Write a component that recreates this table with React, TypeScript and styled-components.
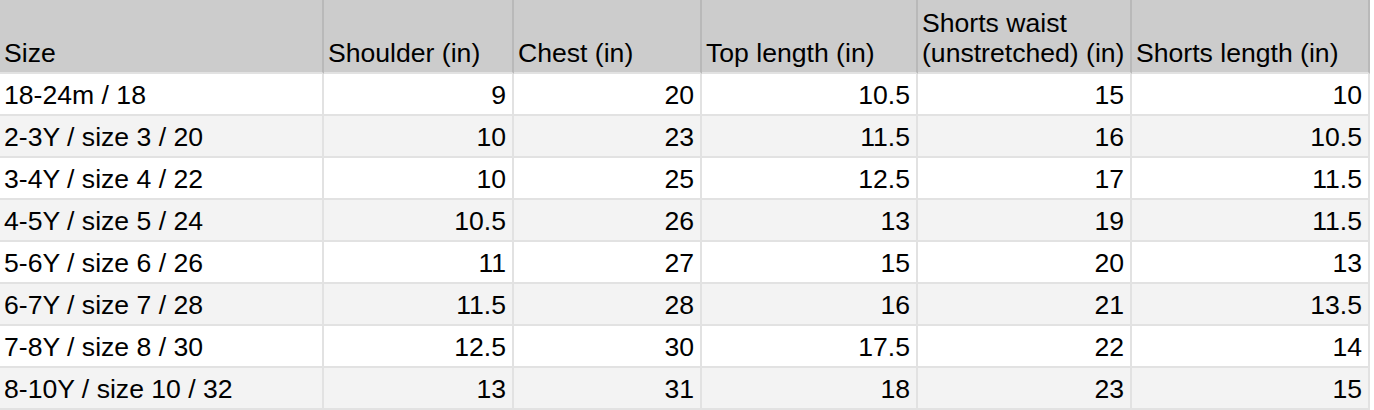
import React from "react";
import styled, { createGlobalStyle } from "styled-components";

const Global = createGlobalStyle`
  html, body { margin: 0; padding: 0; background: #ffffff; }
  body { font-family: "Liberation Sans", Arial, sans-serif; color: #000; }
`;

const COLS = "324px 190px 188px 216px 214px 238px";

const Sheet = styled.div`
  display: flex;
  flex-direction: column;
  width: 1370px;
`;

const Row = styled.div<{ $head?: boolean; $shade?: boolean }>`
  display: grid;
  grid-template-columns: ${COLS};
  height: ${(p) => (p.$head ? "74px" : "42px")};
  background: ${(p) => (p.$head ? "#cccccc" : p.$shade ? "#f3f3f3" : "#ffffff")};
`;

const Cell = styled.div<{ $right?: boolean; $head?: boolean }>`
  box-sizing: border-box;
  display: flex;
  align-items: flex-end;
  justify-content: ${(p) => (p.$right ? "flex-end" : "flex-start")};
  padding: 0 ${(p) => (p.$right ? "6px" : "3px")} 4px ${(p) => (p.$right ? "3px" : "4px")};
  border-right: 2px solid ${(p) => (p.$head ? "#b9b9b9" : "#e2e2e2")};
  border-bottom: 2px solid #e2e2e2;
  font-size: 26.6px;
  line-height: 30px;
  white-space: nowrap;
  overflow: hidden;
`;

const HeadText = styled.span`
  display: block;
  white-space: pre;
`;

const headers = [
  "Size",
  "Shoulder (in)",
  "Chest (in)",
  "Top length (in)",
  "Shorts waist\n(unstretched) (in)",
  "Shorts length (in)",
];

const rows: (string | number)[][] = [
  ["18-24m / 18", 9, 20, 10.5, 15, 10],
  ["2-3Y / size 3 / 20", 10, 23, 11.5, 16, 10.5],
  ["3-4Y / size 4 / 22", 10, 25, 12.5, 17, 11.5],
  ["4-5Y / size 5 / 24", 10.5, 26, 13, 19, 11.5],
  ["5-6Y / size 6 / 26", 11, 27, 15, 20, 13],
  ["6-7Y / size 7 / 28", 11.5, 28, 16, 21, 13.5],
  ["7-8Y / size 8 / 30", 12.5, 30, 17.5, 22, 14],
  ["8-10Y / size 10 / 32", 13, 31, 18, 23, 15],
];

export default function App() {
  return (
    <>
      <Global />
      <Sheet>
        <Row $head>
          {headers.map((h) => (
            <Cell key={h} $head>
              <HeadText>{h}</HeadText>
            </Cell>
          ))}
        </Row>
        {rows.map((r, i) => (
          <Row key={i} $shade={i % 2 === 1}>
            {r.map((v, j) => (
              <Cell key={j} $right={j > 0}>
                {v}
              </Cell>
            ))}
          </Row>
        ))}
      </Sheet>
    </>
  );
}
